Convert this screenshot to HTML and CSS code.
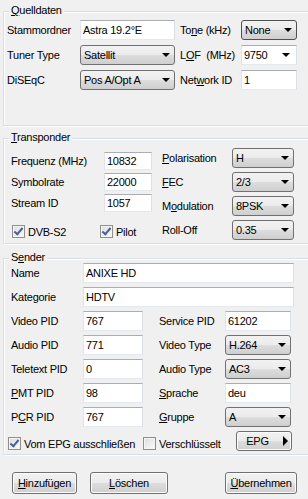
FILE: index.html
```html
<!DOCTYPE html>
<html lang="de">
<head>
  <meta charset="UTF-8">
  <link rel="stylesheet" href="styles.css">
  <title>Sender bearbeiten</title>
</head>
<body>
  <div class="dialog">

    <div class="group group-source">
      <div class="group-title"><u>Q</u>uelldaten</div>
      <div class="source-grid">
        <label>Stammordner</label>
        <div class="edit">Astra 19.2°E</div>
        <label class="right-label">To<u>n</u>e (kHz)</label>
        <div class="drop drop-focus">None</div>

        <label>Tuner Type</label>
        <div class="drop">Satellit</div>
        <label class="right-label">L<u>O</u>F&nbsp;&nbsp;(MHz)</label>
        <div class="edit combo">9750</div>

        <label>DiSEqC</label>
        <div class="drop">Pos A/Opt A</div>
        <label class="right-label">Net<u>w</u>ork ID</label>
        <div class="edit">1</div>
      </div>
    </div>

    <div class="group group-transponder">
      <div class="group-title"><u>T</u>ransponder</div>
      <div class="tp-body">
        <div class="tp-left">
          <div class="row">
            <label>Frequenz (MHz)</label>
            <div class="edit edit-short">10832</div>
          </div>
          <div class="row">
            <label>Symbolrate</label>
            <div class="edit edit-short">22000</div>
          </div>
          <div class="row">
            <label>Stream ID</label>
            <div class="edit edit-short">1057</div>
          </div>
          <div class="check-row">
            <span class="check checked"><span class="box"></span>DVB-S2</span>
            <span class="check checked"><span class="box"></span>Pilot</span>
          </div>
        </div>
        <div class="tp-right">
          <div class="row">
            <label><u>P</u>olarisation</label>
            <div class="drop">H</div>
          </div>
          <div class="row">
            <label><u>F</u>EC</label>
            <div class="drop">2/3</div>
          </div>
          <div class="row">
            <label>M<u>o</u>dulation</label>
            <div class="drop">8PSK</div>
          </div>
          <div class="row">
            <label>Roll-Off</label>
            <div class="drop">0.35</div>
          </div>
        </div>
      </div>
    </div>

    <div class="group group-channel">
      <div class="group-title">S<u>e</u>nder</div>
      <div class="channel-grid">
        <label>Name</label>
        <div class="edit wide">ANIXE HD</div>

        <label>Kategorie</label>
        <div class="edit wide">HDTV</div>

        <label>Video PID</label>
        <div class="edit">767</div>
        <label class="right-label">Service PID</label>
        <div class="edit">61202</div>

        <label>Audio PID</label>
        <div class="edit">771</div>
        <label class="right-label">Video Type</label>
        <div class="drop">H.264</div>

        <label>Teletext PID</label>
        <div class="edit">0</div>
        <label class="right-label">Audio Type</label>
        <div class="drop">AC3</div>

        <label><u>P</u>MT PID</label>
        <div class="edit">98</div>
        <label class="right-label"><u>S</u>prache</label>
        <div class="edit">deu</div>

        <label>P<u>C</u>R PID</label>
        <div class="edit">767</div>
        <label class="right-label"><u>G</u>ruppe</label>
        <div class="drop">A</div>
      </div>
      <div class="channel-checks">
        <span class="check checked"><span class="box"></span>Vom EPG ausschließen</span>
        <span class="check"><span class="box"></span>Verschlüsselt</span>
        <div class="button epg">EPG <span class="arrow-right"></span></div>
      </div>
    </div>

    <div class="buttons">
      <div class="button btn-add"><u>H</u>inzufügen</div>
      <div class="button btn-delete"><u>L</u>öschen</div>
      <div class="button btn-apply"><u>Ü</u>bernehmen</div>
    </div>

  </div>
</body>
</html>
```

FILE: styles.css
```css
body {
  margin: 0;
  width: 308px;
  height: 499px;
  overflow: hidden;
  background-color: #f0f0f0;
  color: #000;
  font-family: "Liberation Sans", Arial, sans-serif;
  font-size: 11px;
  letter-spacing: -0.25px;
}

.dialog {
  padding: 11px 0 0 3px;
}

label {
  white-space: nowrap;
}

u {
  text-decoration-thickness: 1px;
  text-underline-offset: 1px;
}

/* group boxes */

.group {
  width: 330px;
  border: 1px solid #d5dfe5;
  box-shadow: inset 1px 1px #fff, 1px 1px #fff;
}

.group-title {
  width: max-content;
  margin: -8px 0 0 5px;
  padding: 0 2px;
  line-height: 13px;
  background-color: #f0f0f0;
}

.group-transponder {
  margin-top: 12px;
}

.group-channel {
  margin-top: 14px;
}

/* controls */

.edit {
  box-sizing: border-box;
  height: 20px;
  padding: 0 2px;
  line-height: 18px;
  background-color: #fff;
  border: 1px solid;
  border-color: #abadb3 #dbdfe6 #e3e9ef #e2e3ea;
  white-space: nowrap;
}

.combo {
  display: flex;
  align-items: center;
  justify-content: space-between;
}

.combo::after,
.drop::after {
  content: "";
  margin-right: 4px;
  border-left: 4px solid transparent;
  border-right: 4px solid transparent;
  border-top: 4px solid #000;
}

.drop {
  box-sizing: border-box;
  height: 20px;
  padding: 0 0 0 3px;
  display: flex;
  align-items: center;
  justify-content: space-between;
  border: 1px solid #707070;
  border-radius: 3px;
  background: linear-gradient(#f2f2f2 0, #ebebeb 50%, #dddddd 50%, #cfcfcf 100%);
  white-space: nowrap;
}

.drop-focus {
  border-color: #505050;
}

.check {
  display: flex;
  align-items: center;
  gap: 3px;
  white-space: nowrap;
}

.check .box {
  position: relative;
  box-sizing: border-box;
  width: 13px;
  height: 13px;
  border: 1px solid #8f8f8f;
  background: linear-gradient(135deg, #dcdcdc, #fbfbfb);
  box-shadow: inset 0 0 0 1px #f4f4f4;
}

.check.checked .box::after {
  content: "";
  position: absolute;
  left: 3px;
  top: 0;
  width: 3px;
  height: 7px;
  border-right: 2px solid #4a5f97;
  border-bottom: 2px solid #4a5f97;
  transform: rotate(40deg);
}

.button {
  box-sizing: border-box;
  height: 22px;
  display: flex;
  align-items: center;
  justify-content: center;
  border: 1px solid #707070;
  border-radius: 3px;
  background: linear-gradient(#f2f2f2 0, #ebebeb 50%, #dddddd 50%, #cfcfcf 100%);
  box-shadow: inset 0 0 0 1px #fcfcfc;
}

/* Quelldaten */

.source-grid {
  display: grid;
  grid-template-columns: 73px 95px 66px 56px;
  grid-auto-rows: 20px;
  row-gap: 5px;
  align-items: center;
  padding: 3px 0 35px 3px;
}

.right-label {
  padding-left: 5px;
}

/* Transponder */

.tp-body {
  display: flex;
  padding: 0 0 3px 7px;
}

.tp-left {
  width: 141px;
  margin-top: 8px;
  display: flex;
  flex-direction: column;
  gap: 3px;
}

.tp-left .row {
  display: grid;
  grid-template-columns: 93px 48px;
  align-items: center;
}

.edit-short {
  height: 18px;
  line-height: 16px;
}

.check-row {
  display: grid;
  grid-template-columns: 88px auto;
  margin-top: 10px;
  padding-left: 1px;
}

.tp-right {
  margin: 4px 0 0 10px;
  display: flex;
  flex-direction: column;
  gap: 4px;
}

.tp-right .row {
  display: grid;
  grid-template-columns: 70px 62px;
  align-items: center;
  height: 20px;
}

/* Sender */

.channel-grid {
  display: grid;
  grid-template-columns: 72px 60px 82px 66px;
  grid-auto-rows: 20px;
  row-gap: 4px;
  align-items: center;
  margin-top: -1px;
  padding-left: 7px;
}

.channel-grid .right-label {
  padding-left: 16px;
}

.channel-grid .wide {
  grid-column: 2 / 5;
  margin-right: -3px;
}

.channel-checks {
  display: grid;
  grid-template-columns: 135px 93px 56px;
  align-items: end;
  height: 20px;
  margin-top: 4px;
  padding: 0 0 3px 4px;
}

.channel-checks .check {
  margin-bottom: 1px;
}

.epg {
  height: 20px;
  gap: 14px;
  padding-left: 6px;
}

.arrow-right {
  border-top: 5px solid transparent;
  border-bottom: 5px solid transparent;
  border-left: 5px solid #000;
}

/* buttons */

.buttons {
  display: flex;
  margin-top: 17px;
  padding-left: 9px;
}

.btn-add {
  width: 65px;
}

.btn-delete {
  width: 78px;
  margin-left: 13px;
}

.btn-apply {
  width: 72px;
  margin-left: 57px;
}
```
